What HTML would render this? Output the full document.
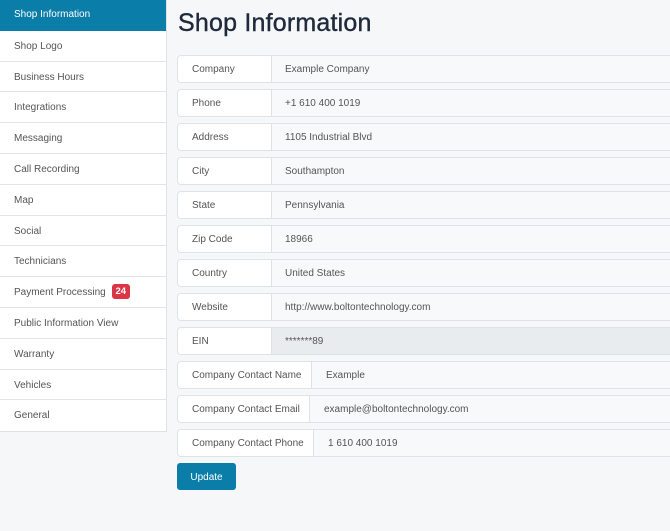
<!DOCTYPE html><html><head><style>
*{box-sizing:border-box;margin:0;padding:0}
body{width:670px;height:531px;overflow:hidden;background:#f6f7f9;font-family:"Liberation Sans",sans-serif;position:relative}
.side{position:absolute;left:0;top:0;width:167px;background:#fff;border-right:1px solid #dfe2e6;border-bottom:1px solid #dfe2e6}
.side div{height:30.8px;line-height:31px;padding-left:14px;font-size:10px;color:#555;border-bottom:1px solid #e2e4e7}
.side div.act{background:#0a7ea8;color:#fff;border-bottom:none;line-height:29px}
.badge{display:inline-block;background:#dc3545;color:#fff;font-weight:bold;font-size:9.5px;line-height:15px;padding:0 4px;border-radius:3px;margin-left:3px;vertical-align:middle;margin-top:-3px}
h1{position:absolute;left:178px;top:9px;font-size:25px;font-weight:normal;color:#1f2a3c;letter-spacing:.2px;-webkit-text-stroke:.4px #1f2a3c}
.row{position:absolute;left:177px;width:500px;height:28px;border:1px solid #dfe2e6;border-radius:4px;background:#f8f9fa;font-size:10px;color:#555;overflow:hidden}
.row .l{position:absolute;left:0;top:0;bottom:0;background:#fff;border-right:1px solid #dfe2e6;padding-left:14px;line-height:27px}
.row .v{position:absolute;top:0;line-height:27px}
.btn{position:absolute;left:177px;top:463px;width:59px;height:27px;background:#0a7ea8;border-radius:3px;color:#fff;font-size:10px;text-align:center;line-height:29px}
</style></head><body>
<div class="side">
<div class="act">Shop Information</div><div>Shop Logo</div><div>Business Hours</div><div>Integrations</div><div>Messaging</div><div>Call Recording</div><div>Map</div><div>Social</div><div>Technicians</div><div>Payment Processing <span class="badge">24</span></div><div>Public Information View</div><div>Warranty</div><div>Vehicles</div><div style="border-bottom:none">General</div>
</div>
<h1>Shop Information</h1>
<div class="row" style="top:55px"><div class="l" style="width:94px">Company</div><div class="v" style="left:107px">Example Company</div></div>
<div class="row" style="top:89px"><div class="l" style="width:94px">Phone</div><div class="v" style="left:107px">+1 610 400 1019</div></div>
<div class="row" style="top:123px"><div class="l" style="width:94px">Address</div><div class="v" style="left:107px">1105 Industrial Blvd</div></div>
<div class="row" style="top:157px"><div class="l" style="width:94px">City</div><div class="v" style="left:107px">Southampton</div></div>
<div class="row" style="top:191px"><div class="l" style="width:94px">State</div><div class="v" style="left:107px">Pennsylvania</div></div>
<div class="row" style="top:225px"><div class="l" style="width:94px">Zip Code</div><div class="v" style="left:107px">18966</div></div>
<div class="row" style="top:259px"><div class="l" style="width:94px">Country</div><div class="v" style="left:107px">United States</div></div>
<div class="row" style="top:293px"><div class="l" style="width:94px">Website</div><div class="v" style="left:107px">http://www.boltontechnology.com</div></div>
<div class="row" style="top:327px;background:#e9ecef"><div class="l" style="width:94px">EIN</div><div class="v" style="left:107px">*******89</div></div>
<div class="row" style="top:361px"><div class="l" style="width:134px">Company Contact Name</div><div class="v" style="left:148px">Example</div></div>
<div class="row" style="top:395px"><div class="l" style="width:132px">Company Contact Email</div><div class="v" style="left:146px">example@boltontechnology.com</div></div>
<div class="row" style="top:429px"><div class="l" style="width:136px">Company Contact Phone</div><div class="v" style="left:150px">1 610 400 1019</div></div>
<div class="btn">Update</div>
</body></html>
